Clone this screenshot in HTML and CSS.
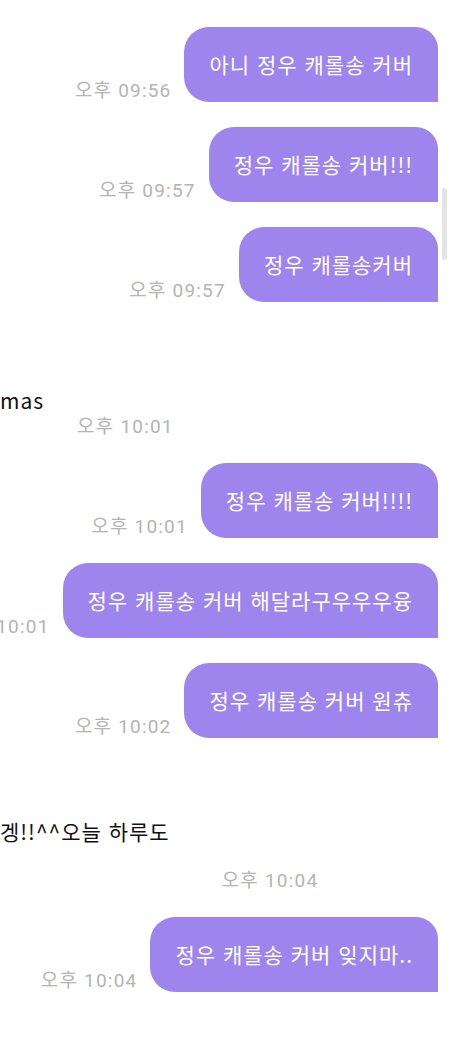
FILE: index.html
```html
<!DOCTYPE html>
<html lang="ko">
    <head>
        <meta charset="utf-8">
        <meta name="viewport" content="width=device-width,initial-scale=1" />
        <title>채팅</title>
        <link rel="stylesheet" href="styles.css">
    </head>
    <body>
        <div class="chat">
            <div class="msg out">
                <span class="time">오후 09:56</span>
                <div class="bubble out">아니 정우 캐롤송 커버</div>
            </div>
            <div class="msg out">
                <span class="time">오후 09:57</span>
                <div class="bubble out">정우 캐롤송 커버!!!</div>
            </div>
            <div class="msg out">
                <span class="time">오후 09:57</span>
                <div class="bubble out">정우 캐롤송커버</div>
            </div>

            <div class="msg in">
                <div class="bubble in">mas</div>
                <span class="time">오후 10:01</span>
            </div>

            <div class="msg out">
                <span class="time">오후 10:01</span>
                <div class="bubble out">정우 캐롤송 커버!!!!</div>
            </div>
            <div class="msg out">
                <span class="time">오후 10:01</span>
                <div class="bubble out">정우 캐롤송 커버 해달라구우우우융</div>
            </div>
            <div class="msg out">
                <span class="time">오후 10:02</span>
                <div class="bubble out">정우 캐롤송 커버 원츄</div>
            </div>

            <div class="msg in second">
                <div class="bubble in tall">겡!!^^오늘 하루도</div>
                <span class="time">오후 10:04</span>
            </div>

            <div class="msg out">
                <span class="time">오후 10:04</span>
                <div class="bubble out">정우 캐롤송 커버 잊지마..</div>
            </div>
        </div>
        <div class="scrollbar"></div>
    </body>
</html>
```

FILE: styles.css
```css
body{
    margin: 0;
    background: #ffffff;
    font-family: "Noto Sans CJK KR", sans-serif;
    overflow: hidden;
}
.chat{
    display: flex;
    flex-direction: column;
    gap: 25px;
    padding: 27px 16px 0 0;
}
.msg{
    display: flex;
    align-items: flex-end;
    gap: 13px;
}
.msg.out{
    justify-content: flex-end;
}
.msg.in{
    justify-content: flex-start;
    margin-top: 36px;
}
.msg.in.second{
    margin-top: 31px;
}
.bubble{
    flex-shrink: 0;
    white-space: nowrap;
    font-size: 21px;
    line-height: 30px;
    letter-spacing: 1px;
    padding: 22px 25px 23px 25px;
}
.bubble.out{
    background: #9e85ee;
    color: #ffffff;
    border-radius: 25px 22px 0 25px;
}
.bubble.in{
    background: #ffffff;
    color: #111111;
    margin-left: -25px;
    padding-right: 20px;
}
.bubble.in.tall{
    padding-right: 39px;
    padding-bottom: 46px;
}
.time{
    flex-shrink: 0;
    white-space: nowrap;
    color: #b4b4b4;
    font-family: "Roboto", "Noto Sans CJK KR", sans-serif;
    font-size: 19px;
    line-height: 22px;
    letter-spacing: 1.2px;
}
.scrollbar{
    position: fixed;
    top: 188px;
    left: 442px;
    width: 5px;
    height: 72px;
    border-radius: 3px;
    background: #e4e4e4;
}
```
